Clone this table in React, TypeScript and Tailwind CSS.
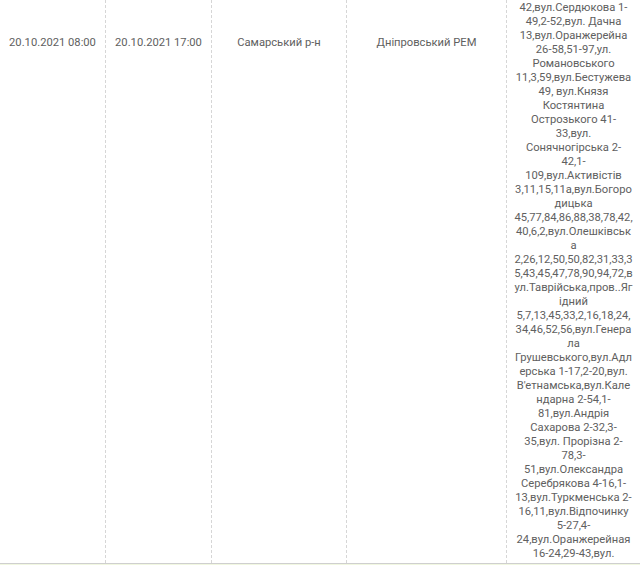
import React from "react";

// Lines of the address cell, kept as they wrap in the narrow column
const addressLines: string[] = [
  "42,вул.Сердюкова 1-",
  "49,2-52,вул. Дачна",
  "13,вул.Оранжерейна",
  "26-58,51-97,ул.",
  "Романовського",
  "11,3,59,вул.Бестужева",
  "49, вул.Князя",
  "Костянтина",
  "Острозького 41-",
  "33,вул.",
  "Сонячногірська 2-",
  "42,1-",
  "109,вул.Активістів",
  "3,11,15,11а,вул.Богоро",
  "дицька",
  "45,77,84,86,88,38,78,42,",
  "40,6,2,вул.Олешківськ",
  "а",
  "2,26,12,50,50,82,31,33,3",
  "5,43,45,47,78,90,94,72,в",
  "ул.Таврійська,пров..Яг",
  "ідний",
  "5,7,13,45,33,2,16,18,24,",
  "34,46,52,56,вул.Генера",
  "ла",
  "Грушевського,вул.Адл",
  "ерська 1-17,2-20,вул.",
  "В'етнамська,вул.Кале",
  "ндарна 2-54,1-",
  "81,вул.Андрія",
  "Сахарова 2-32,3-",
  "35,вул. Прорізна 2-",
  "78,3-",
  "51,вул.Олександра",
  "Серебрякова 4-16,1-",
  "13,вул.Туркменська 2-",
  "16,11,вул.Відпочинку",
  "5-27,4-",
  "24,вул.Оранжерейная",
  "16-24,29-43,вул.",
];

interface OutageRow {
  start: string;
  end: string;
  district: string;
  rem: string;
  address: string[];
}

const row: OutageRow = {
  start: "20.10.2021 08:00",
  end: "20.10.2021 17:00",
  district: "Самарський р-н",
  rem: "Дніпровський РЕМ",
  address: addressLines,
};

const Cell: React.FC<{ className: string; children: React.ReactNode }> = ({
  className,
  children,
}) => (
  <div
    className={`shrink-0 border-r border-dashed border-[#d6d6d6] px-2 pt-[36px] text-center whitespace-nowrap ${className}`}
  >
    {children}
  </div>
);

const App: React.FC = () => {
  return (
    <div className="h-[565px] w-[640px] overflow-hidden bg-white font-['Roboto',sans-serif] text-[11.2px] leading-[14px] text-[#606060]">
      {/* Table row */}
      <div className="flex border-b border-[#cfcfcf]">
        <Cell className="w-[106px]">{row.start}</Cell>
        <Cell className="w-[106px]">{row.end}</Cell>
        <Cell className="w-[135px]">{row.district}</Cell>
        <Cell className="w-[160px]">{row.rem}</Cell>
        <div className="flex-1 px-1 pt-[1px] pb-[2px] text-center">
          {row.address.map((line, i) => (
            <div key={i} className="whitespace-nowrap">
              {line}
            </div>
          ))}
        </div>
      </div>

      {/* Next (highlighted) row starts here */}
      <div className="h-4 bg-[#f1f7e1]" />
    </div>
  );
};

export default App;
